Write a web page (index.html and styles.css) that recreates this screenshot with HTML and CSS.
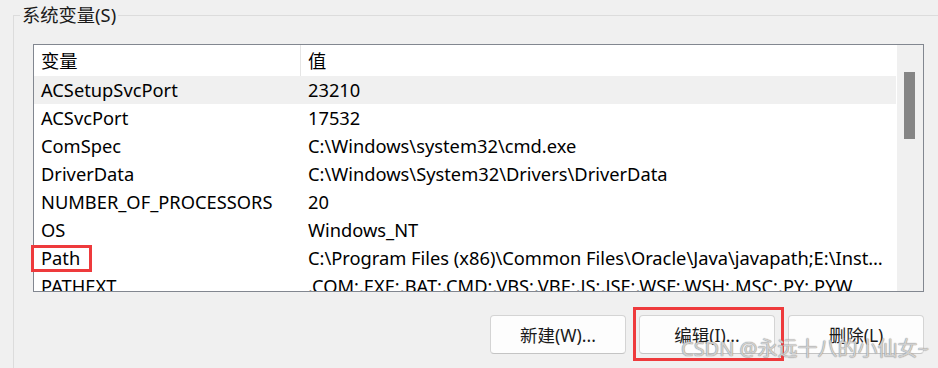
FILE: index.html
```html
<!DOCTYPE html>
<html lang="zh-CN">
<head>
  <meta charset="UTF-8" />
  <title>系统变量</title>
  <link rel="stylesheet" href="styles.css">
</head>
<body>

  <fieldset class="group">
    <legend>系统变量(S)</legend>

    <div class="list">
      <div class="table">
        <div class="row head">
          <div class="cell name">变量</div>
          <div class="cell value">值</div>
        </div>
        <div class="rows">
          <div class="row selected">
            <div class="cell name">ACSetupSvcPort</div>
            <div class="cell value">23210</div>
          </div>
          <div class="row">
            <div class="cell name">ACSvcPort</div>
            <div class="cell value">17532</div>
          </div>
          <div class="row">
            <div class="cell name">ComSpec</div>
            <div class="cell value">C:\Windows\system32\cmd.exe</div>
          </div>
          <div class="row">
            <div class="cell name">DriverData</div>
            <div class="cell value">C:\Windows\System32\Drivers\DriverData</div>
          </div>
          <div class="row">
            <div class="cell name">NUMBER_OF_PROCESSORS</div>
            <div class="cell value">20</div>
          </div>
          <div class="row">
            <div class="cell name">OS</div>
            <div class="cell value">Windows_NT</div>
          </div>
          <div class="row">
            <div class="cell name mark">Path</div>
            <div class="cell value">C:\Program Files (x86)\Common Files\Oracle\Java\javapath;E:\Install\Python\Scripts\;E:\Install\Python\</div>
          </div>
          <div class="row">
            <div class="cell name">PATHEXT</div>
            <div class="cell value">.COM;.EXE;.BAT;.CMD;.VBS;.VBE;.JS;.JSE;.WSF;.WSH;.MSC;.PY;.PYW</div>
          </div>
        </div>
      </div>
      <div class="scrollbar">
        <div class="thumb"></div>
      </div>
    </div>

    <div class="actions">
      <button type="button">新建(W)...</button>
      <button type="button" class="marked">编辑(I)...</button>
      <button type="button">删除(L)</button>
    </div>
  </fieldset>

  <!-- watermark -->
  <div class="watermark">CSDN @永远十八的小仙女~</div>

</body>
</html>
```

FILE: styles.css
```css
html, body {
  margin: 0;
  height: 368px;
  overflow: hidden;
}
body {
  background: #f0f0f0;
  font-family: "Noto Sans", "Noto Sans CJK SC", sans-serif;
  font-size: 18.3px;
  color: #000;
  position: relative;
}

/* Group box */
.group {
  margin: 5px 0 0 13px;
  padding: 0 0 0 19px;
  width: 926px;
  height: 364px;
  border: 1px solid #dcdcdc;
  box-sizing: border-box;
}
.group legend {
  margin-left: -13px;
  padding: 0 2px;
  line-height: 20px;
  color: #1a1a1a;
}

/* List view */
.list {
  margin-top: 19px;
  width: 891px;
  height: 248px;
  border: 1px solid #828790;
  box-sizing: border-box;
  background: #fff;
  display: flex;
}
.table {
  flex: 1;
  min-width: 0;
}
.rows {
  height: 215px;
  clip-path: inset(0 -12px 0 -12px);
}
.row {
  display: flex;
  height: 28px;
  line-height: 28px;
}
.row.head {
  height: 31px;
  line-height: 31px;
}
.row.selected {
  background: #f0f0f0;
}
.cell {
  white-space: nowrap;
  box-sizing: border-box;
}
.cell.name {
  width: 267px;
  padding-left: 7px;
  position: relative;
}
.row.head .cell.name {
  border-right: 1px solid #e5e5e5;
}
.cell.value {
  flex: 1;
  min-width: 0;
  padding: 0 6px 0 7px;
  overflow: hidden;
  text-overflow: ellipsis;
}

/* red annotation boxes */
.cell.mark::after {
  content: "";
  position: absolute;
  left: -3px;
  top: 1px;
  width: 61px;
  height: 27px;
  border: 3px solid #ee3a3c;
  box-sizing: border-box;
}

.scrollbar {
  width: 26px;
  border-left: 1px solid #fff;
  background: #f0f0f0;
  padding-top: 27px;
}
.thumb {
  width: 11px;
  height: 67px;
  margin-left: 7px;
  background: #858585;
}

/* Buttons */
.actions {
  width: 891px;
  margin-top: 23px;
  display: flex;
  justify-content: flex-end;
  gap: 13px;
}
.actions button {
  width: 136px;
  height: 39px;
  font: inherit;
  font-size: 17.5px;
  color: #1a1a1a;
  background: #fdfdfd;
  border: 1px solid #d4d4d4;
  border-bottom-color: #c4c4c4;
  border-radius: 4px;
  position: relative;
}
.actions button.marked::after {
  content: "";
  position: absolute;
  left: -7px;
  right: -10px;
  top: -9px;
  bottom: -8px;
  border: 3px solid #ee3a3c;
}

.watermark {
  position: absolute;
  left: 681px;
  top: 336px;
  font-size: 20px;
  line-height: 26px;
  color: rgba(255, 255, 255, 0.6);
  text-shadow: 0 0 1px #8a8a8a, 0 0 1px #8a8a8a;
  white-space: nowrap;
}
```
